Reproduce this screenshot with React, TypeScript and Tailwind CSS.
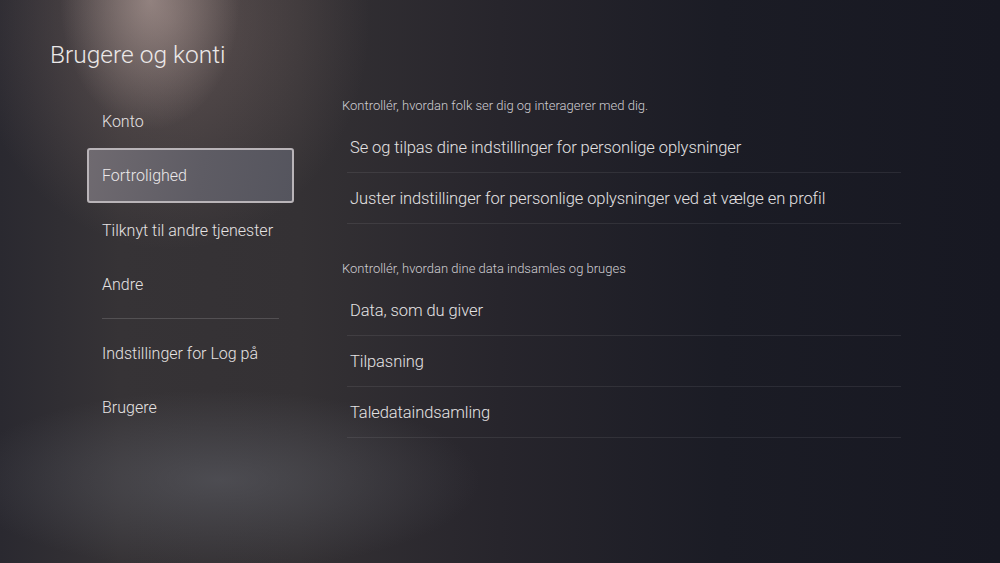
const leftItems = ["Konto", "Fortrolighed", "Tilknyt til andre tjenester", "Andre"];
const leftItems2 = ["Indstillinger for Log på", "Brugere"];

const section1 = [
  "Se og tilpas dine indstillinger for personlige oplysninger",
  "Juster indstillinger for personlige oplysninger ved at vælge en profil",
];
const section2 = ["Data, som du giver", "Tilpasning", "Taledataindsamling"];

const SettingsRow = ({ label }: { label: string }) => (
  <div className="ml-[5px] flex h-[51px] w-[554px] items-center border-b border-white/[0.08] pt-[3px] pl-[3px] text-[16.5px] tracking-[-0.08px] text-[#e4e2e3]">
    {label}
  </div>
);

const Heading = ({ children }: { children: string }) => (
  <div className="flex h-[22px] items-center pt-[2px] text-[13px] text-[#cfcdd2]">
    {children}
  </div>
);

const MenuItem = ({ label, active }: { label: string; active?: boolean }) => (
  <div
    className={
      active
        ? "flex h-[55px] items-center rounded-[3px] border-2 border-[#b9b4b8] bg-[linear-gradient(100deg,#6f6a70_0%,#5e5c64_55%,#55555e_100%)] pl-[13px] text-[16px] text-[#ece9ea]"
        : "flex h-[54px] items-center pt-[2px] pl-[15px] text-[16px] text-[#e6e3e3]"
    }
  >
    {label}
  </div>
);

export default function App() {
  return (
    <div className="h-[563px] w-[1000px] overflow-hidden bg-[#181923] bg-[radial-gradient(ellipse_90px_130px_at_150px_0px,rgba(185,165,160,0.6),transparent),radial-gradient(ellipse_200px_230px_at_170px_20px,rgba(140,118,114,0.45),transparent),radial-gradient(ellipse_260px_90px_at_220px_480px,rgba(100,102,110,0.5),transparent),linear-gradient(90deg,#2a2930_0%,#363336_12%,#343134_30%,#27252c_50%,#1b1c25_72%,#171822_100%)] pt-[40px] font-['Roboto',sans-serif] font-light">
      <h1 className="h-[30px] pl-[50px] text-[24.5px] leading-[30px] font-light text-[#ebe8e8]">
        Brugere og konti
      </h1>
      <div className="mt-[24px] flex">
        <div className="ml-[87px] w-[207px]">
          {leftItems.map((l) => (
            <MenuItem key={l} label={l} active={l === "Fortrolighed"} />
          ))}
          <div className="mx-[15px] my-[7px] h-px w-[177px] bg-white/15" />
          {leftItems2.map((l) => (
            <MenuItem key={l} label={l} />
          ))}
        </div>
        <div className="ml-[48px] flex flex-col">
          <Heading>Kontrollér, hvordan folk ser dig og interagerer med dig.</Heading>
          <div className="mt-[6px]">
            {section1.map((s) => (
              <SettingsRow key={s} label={s} />
            ))}
          </div>
          <div className="mt-[33px]">
            <Heading>Kontrollér, hvordan dine data indsamles og bruges</Heading>
          </div>
          <div className="mt-[6px]">
            {section2.map((s) => (
              <SettingsRow key={s} label={s} />
            ))}
          </div>
        </div>
      </div>
    </div>
  );
}
